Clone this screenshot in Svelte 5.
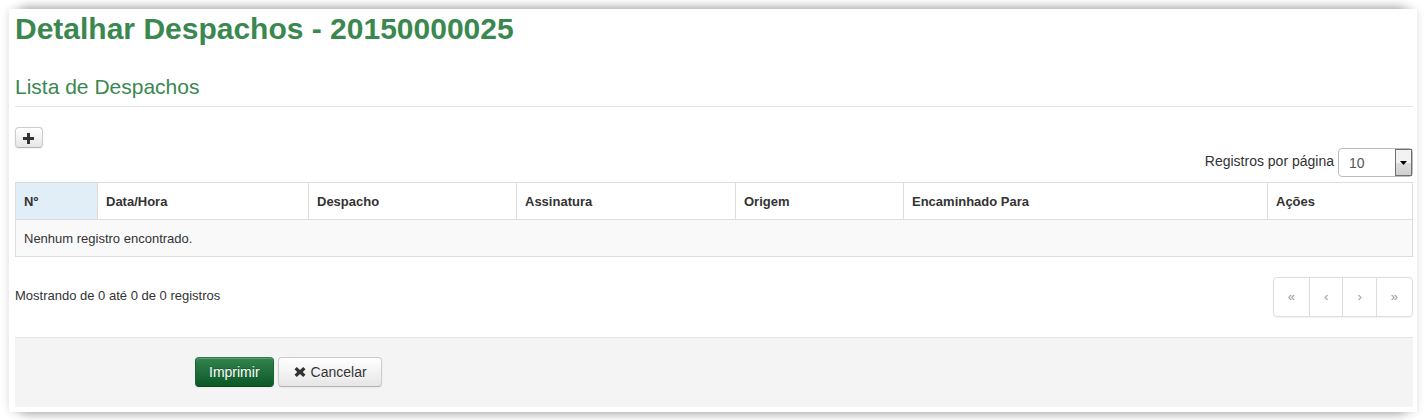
<script>
  const columns = [
    { name: 'Nº', width: 82, sorted: true },
    { name: 'Data/Hora', width: 211 },
    { name: 'Despacho', width: 208 },
    { name: 'Assinatura', width: 219 },
    { name: 'Origem', width: 168 },
    { name: 'Encaminhado Para', width: 364 },
    { name: 'Ações', width: 145 },
  ];
  const total = columns.reduce((sum, c) => sum + c.width, 0);
  const pages = [
    { glyph: '«', label: 'Primeira' },
    { glyph: '‹', label: 'Anterior' },
    { glyph: '›', label: 'Próxima' },
    { glyph: '»', label: 'Última' },
  ];
  let pageSize = $state('10');
</script>

<main>
  <h1>Detalhar Despachos - 20150000025</h1>
  <h2>Lista de Despachos</h2>

  <button type="button" class="btn mini" aria-label="Adicionar">
    <svg width="12" height="12" viewBox="0 0 12 12" aria-hidden="true">
      <path d="M4 1h3v4h4v3H7v4H4V8H0V5h4z" />
    </svg>
  </button>

  <div class="length">
    <label for="page-size">Registros por página</label>
    <span class="select">
      <select id="page-size" bind:value={pageSize}>
        <option>10</option>
        <option>25</option>
        <option>50</option>
        <option>100</option>
      </select>
      <span class="arrow">
        <svg width="7" height="4" viewBox="0 0 7 4" aria-hidden="true"><path d="M0 0h7L3.5 4z" /></svg>
      </span>
    </span>
  </div>

  <table>
    <colgroup>
      {#each columns as c}
        <col style:width="{(c.width / total) * 100}%" />
      {/each}
    </colgroup>
    <thead>
      <tr>
        {#each columns as c}
          <th scope="col" class:sorted={c.sorted}>{c.name}</th>
        {/each}
      </tr>
    </thead>
    <tbody>
      <tr><td colspan={columns.length}>Nenhum registro encontrado.</td></tr>
    </tbody>
  </table>

  <div class="summary">
    <p>Mostrando de 0 até 0 de 0 registros</p>
    <nav>
      {#each pages as p}
        <a href="#lista" aria-label={p.label}>{p.glyph}</a>
      {/each}
    </nav>
  </div>

  <div class="actions">
    <button type="button" class="btn primary">Imprimir</button>
    <button type="button" class="btn">
      <svg width="14" height="12" viewBox="0 0 14 12" aria-hidden="true">
        <path d="M3.8 1L7 4l3.2-3L12.5 3.3 9.8 6l2.7 2.7L10.2 11 7 8l-3.2 3L1.5 8.7 4.2 6 1.5 3.3z" />
      </svg>
      Cancelar
    </button>
  </div>
</main>

<style>
  :global(body) {
    background: #fff;
  }
  main {
    margin: 9px 8px 8px 9px;
    padding: 0 4px 5px 6px;
    display: flow-root;
    background: #fff;
    box-shadow:
      0 0 8px rgba(0, 0, 0, 0.14),
      0 -14px 10px -12px rgba(0, 0, 0, 0.28),
      0 14px 10px -12px rgba(0, 0, 0, 0.28);
    color: #333;
    font: 14px/20px "Liberation Sans", Arial, sans-serif;
  }
  h1 {
    margin: 0;
    color: #3a8850;
    font-size: 30px;
    line-height: 40px;
  }
  h2 {
    margin: 18px 0 20px;
    color: #3a8850;
    font-size: 21px;
    font-weight: 400;
    line-height: 39px;
    border-bottom: 1px solid #e5e5e5;
  }
  .btn {
    display: inline-flex;
    align-items: center;
    gap: 4px;
    box-sizing: border-box;
    height: 30px;
    padding: 0 14px;
    border: 1px solid #ccc;
    border-bottom-color: #b3b3b3;
    border-radius: 4px;
    background: linear-gradient(#fff, #e6e6e6);
    box-shadow: inset 0 1px 0 rgba(255, 255, 255, 0.2), 0 1px 2px rgba(0, 0, 0, 0.05);
    color: #333;
    font: inherit;
    text-shadow: 0 1px 1px rgba(255, 255, 255, 0.75);
    cursor: pointer;
  }
  .btn svg {
    fill: #333;
  }
  .mini {
    display: flex;
    height: 21px;
    padding: 0 7px;
  }
  .primary {
    padding: 0 13px;
    border-color: #2f7d49 #1a6534 #07491f;
    background: linear-gradient(#34844e, #0b5828);
    color: #fff;
    text-shadow: 0 -1px 0 rgba(0, 0, 0, 0.25);
  }
  .length {
    display: flex;
    justify-content: flex-end;
    gap: 4px;
    line-height: 26px;
  }
  .select {
    position: relative;
  }
  select {
    appearance: none;
    display: block;
    box-sizing: border-box;
    width: 75px;
    height: 29px;
    padding: 1px 20px 0 10px;
    border: 1px solid #bbb;
    border-radius: 4px;
    background: #fff;
    color: #555;
    font: inherit;
  }
  .arrow {
    position: absolute;
    top: 1px;
    right: 1px;
    bottom: 1px;
    width: 15px;
    border: 1px solid #707070;
    display: flex;
    align-items: center;
    justify-content: center;
    background: linear-gradient(#f2f2f2 50%, #ddd 50%, #cfcfcf);
    pointer-events: none;
  }
  table {
    width: 100%;
    margin-top: 5px;
    table-layout: fixed;
    border: 1px solid #ddd;
    border-width: 0 1px 1px 0;
    border-spacing: 0;
    font-size: 13px;
  }
  th,
  td {
    padding: 9px 8px 7px;
    border: 1px solid #ddd;
    border-width: 1px 0 0 1px;
    text-align: left;
  }
  td {
    background: #f9f9f9;
  }
  .sorted {
    background: #e1eef7;
  }
  .summary {
    display: flex;
    justify-content: space-between;
    margin: 20px 0;
    font-size: 13px;
  }
  p {
    margin: 9px 0;
  }
  nav {
    display: flex;
    border: 1px solid #ddd;
    border-radius: 4px;
    box-shadow: 0 1px 2px rgba(0, 0, 0, 0.05);
    line-height: 38px;
  }
  a {
    padding: 0 14px;
    color: #999;
    text-decoration: none;
  }
  a + a {
    border-left: 1px solid #ddd;
  }
  .actions {
    display: flex;
    gap: 4px;
    padding: 19px 20px 20px 180px;
    border-top: 1px solid #e5e5e5;
    background: #f4f4f4;
  }
</style>
